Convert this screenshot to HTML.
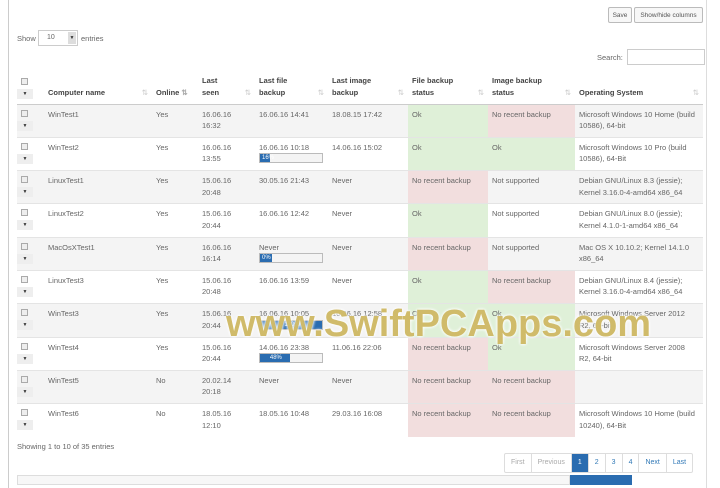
<!DOCTYPE html>
<html><head><style>
*{box-sizing:border-box;margin:0;padding:0}
body{width:720px;height:480px;overflow:hidden;background:#fff;font-family:"Liberation Sans",sans-serif;font-size:7.5px;color:#666;position:relative}
.frame{position:absolute;left:8px;top:-2px;width:699px;height:490px;border-left:1px solid #ccc;border-right:1px solid #ddd}
.btn{position:absolute;border:1px solid #bbb;background:#f7f7f7;font-size:6.5px;color:#555;text-align:center;line-height:15px;height:16px;border-radius:2px}
table{position:absolute;left:17px;top:72px;border-collapse:collapse;table-layout:fixed;width:686px}
th{font-weight:bold;color:#444;text-align:left;vertical-align:bottom;padding:0 4px 5px;height:32px;border-bottom:1.5px solid #ccc;position:relative;line-height:12px}
th .s{position:absolute;right:4px;bottom:5px;color:#ccc;font-weight:normal}
tr.r{height:33.3px}
td{vertical-align:top;padding:4px 4px 0;height:33.3px;border-top:1px solid #e4e4e4;line-height:11.5px;overflow:hidden}
td:last-child{padding-right:7px}
tr.g td{background:#f4f4f4}
td.ok{background:#dff0d8!important}
td.bad{background:#f2dede!important}
.cb{display:block;width:7px;height:7px;border:1px solid #aaa;background:#eee;margin:1px 0 4px 4px}
.dd{display:block;width:16px;height:10px;background:#eee;font-size:5px;text-align:center;line-height:10px;color:#333}
.pb{width:64px;height:10px;border:1px solid #bbb;background:#f4f4f4;margin-top:0}
.pb div{height:8px;background:#2a6cb0;color:#fff;font-size:6px;line-height:8px;padding-left:2px}
.pg{position:absolute;top:453px;left:504px;display:flex;border:1px solid #ddd;border-radius:2px}
.pg span{padding:0 6px;line-height:18px;border-left:1px solid #ddd;color:#337ab7;font-size:7px}
.pg span.d{color:#aaa}
.pg span.a{background:#2a6cb0;color:#fff}
.wm{position:absolute;left:226px;top:303px;font-size:38px;font-weight:bold;color:rgba(200,175,80,.85);text-shadow:0 0 3px #fff,0 0 3px #fff;white-space:nowrap}
</style></head><body>
<div class="frame"></div>
<div class="btn" style="left:608px;top:7px;width:24px">Save</div>
<div class="btn" style="left:634px;top:7px;width:69px">Show/hide columns</div>
<div style="position:absolute;left:17px;top:34px">Show</div>
<div style="position:absolute;left:38px;top:30px;width:40px;height:16px;border:1px solid #ccc;padding:3px 0 0 8px;font-size:7px">10<span style="position:absolute;right:1px;top:1px;width:8px;height:12px;background:#ddd;font-size:5px;text-align:center;line-height:12px;color:#333">▼</span></div>
<div style="position:absolute;left:81px;top:34px">entries</div>
<div style="position:absolute;left:597px;top:53px">Search:</div>
<div style="position:absolute;left:627px;top:49px;width:78px;height:16px;border:1px solid #ccc"></div>
<table>
<colgroup><col style="width:27px"><col style="width:108px"><col style="width:46px"><col style="width:57px"><col style="width:73px"><col style="width:80px"><col style="width:80px"><col style="width:87px"><col style="width:128px"></colgroup>
<tr><th style="padding-left:0"><span class="cb"></span><span class="dd">▼</span></th><th>Computer name<span class="s">⇅</span></th><th>Online <span style="color:#aaa">⇅</span></th><th>Last<br>seen<span class="s">⇅</span></th><th>Last file<br>backup<span class="s">⇅</span></th><th>Last image<br>backup<span class="s">⇅</span></th><th>File backup<br>status<span class="s">⇅</span></th><th>Image backup<br>status<span class="s">⇅</span></th><th>Operating System<span class="s">⇅</span></th></tr>
<tr class="g r"><td style="padding-left:0"><span class="cb"></span><span class="dd">▼</span></td><td>WinTest1</td><td>Yes</td><td>16.06.16<br>16:32</td><td>16.06.16 14:41</td><td>18.08.15 17:42</td><td class="ok">Ok</td><td class="bad">No recent backup</td><td>Microsoft Windows 10 Home (build 10586), 64-bit</td></tr>
<tr class="r"><td style="padding-left:0"><span class="cb"></span><span class="dd">▼</span></td><td>WinTest2</td><td>Yes</td><td>16.06.16<br>13:55</td><td>16.06.16 10:18<div class="pb"><div style="width:16%">16%</div></div></td><td>14.06.16 15:02</td><td class="ok">Ok</td><td class="ok">Ok</td><td>Microsoft Windows 10 Pro (build 10586), 64-Bit</td></tr>
<tr class="g r"><td style="padding-left:0"><span class="cb"></span><span class="dd">▼</span></td><td>LinuxTest1</td><td>Yes</td><td>15.06.16<br>20:48</td><td>30.05.16 21:43</td><td>Never</td><td class="bad">No recent backup</td><td>Not supported</td><td>Debian GNU/Linux 8.3 (jessie); Kernel 3.16.0-4-amd64 x86_64</td></tr>
<tr class="r"><td style="padding-left:0"><span class="cb"></span><span class="dd">▼</span></td><td>LinuxTest2</td><td>Yes</td><td>15.06.16<br>20:44</td><td>16.06.16 12:42</td><td>Never</td><td class="ok">Ok</td><td>Not supported</td><td>Debian GNU/Linux 8.0 (jessie); Kernel 4.1.0-1-amd64 x86_64</td></tr>
<tr class="g r"><td style="padding-left:0"><span class="cb"></span><span class="dd">▼</span></td><td>MacOsXTest1</td><td>Yes</td><td>16.06.16<br>16:14</td><td>Never<div class="pb"><div style="width:20%">0%</div></div></td><td>Never</td><td class="bad">No recent backup</td><td>Not supported</td><td>Mac OS X 10.10.2; Kernel 14.1.0 x86_64</td></tr>
<tr class="r"><td style="padding-left:0"><span class="cb"></span><span class="dd">▼</span></td><td>LinuxTest3</td><td>Yes</td><td>15.06.16<br>20:48</td><td>16.06.16 13:59</td><td>Never</td><td class="ok">Ok</td><td class="bad">No recent backup</td><td>Debian GNU/Linux 8.4 (jessie); Kernel 3.16.0-4-amd64 x86_64</td></tr>
<tr class="g r"><td style="padding-left:0"><span class="cb"></span><span class="dd">▼</span></td><td>WinTest3</td><td>Yes</td><td>15.06.16<br>20:44</td><td>16.06.16 10:05<div class="pb"><div style="width:100%;text-align:center">100%</div></div></td><td>16.06.16 12:58</td><td class="ok">Ok</td><td class="ok">Ok</td><td>Microsoft Windows Server 2012<br>R2, 64-bit</td></tr>
<tr class="r"><td style="padding-left:0"><span class="cb"></span><span class="dd">▼</span></td><td>WinTest4</td><td>Yes</td><td>15.06.16<br>20:44</td><td>14.06.16 23:38<div class="pb"><div style="width:48%;text-align:center">48%</div></div></td><td>11.06.16 22:06</td><td class="bad">No recent backup</td><td class="ok">Ok</td><td>Microsoft Windows Server 2008<br>R2, 64-bit</td></tr>
<tr class="g r"><td style="padding-left:0"><span class="cb"></span><span class="dd">▼</span></td><td>WinTest5</td><td>No</td><td>20.02.14<br>20:18</td><td>Never</td><td>Never</td><td class="bad">No recent backup</td><td class="bad">No recent backup</td><td></td></tr>
<tr class="r"><td style="padding-left:0"><span class="cb"></span><span class="dd">▼</span></td><td>WinTest6</td><td>No</td><td>18.05.16<br>12:10</td><td>18.05.16 10:48</td><td>29.03.16 16:08</td><td class="bad">No recent backup</td><td class="bad">No recent backup</td><td>Microsoft Windows 10 Home (build 10240), 64-Bit</td></tr>
</table>
<div style="position:absolute;left:17px;top:442px">Showing 1 to 10 of 35 entries</div>
<div class="pg"><span class="d" style="border-left:0">First</span><span class="d">Previous</span><span class="a">1</span><span>2</span><span>3</span><span>4</span><span>Next</span><span>Last</span></div>
<div style="position:absolute;left:17px;top:475px;width:553px;height:10px;border:1px solid #ddd;background:#f7f7f7"></div>
<div style="position:absolute;left:570px;top:475px;width:62px;height:10px;background:#2a6cb0"></div>
<div class="wm">www.SwiftPCApps.com</div>
</body></html>
